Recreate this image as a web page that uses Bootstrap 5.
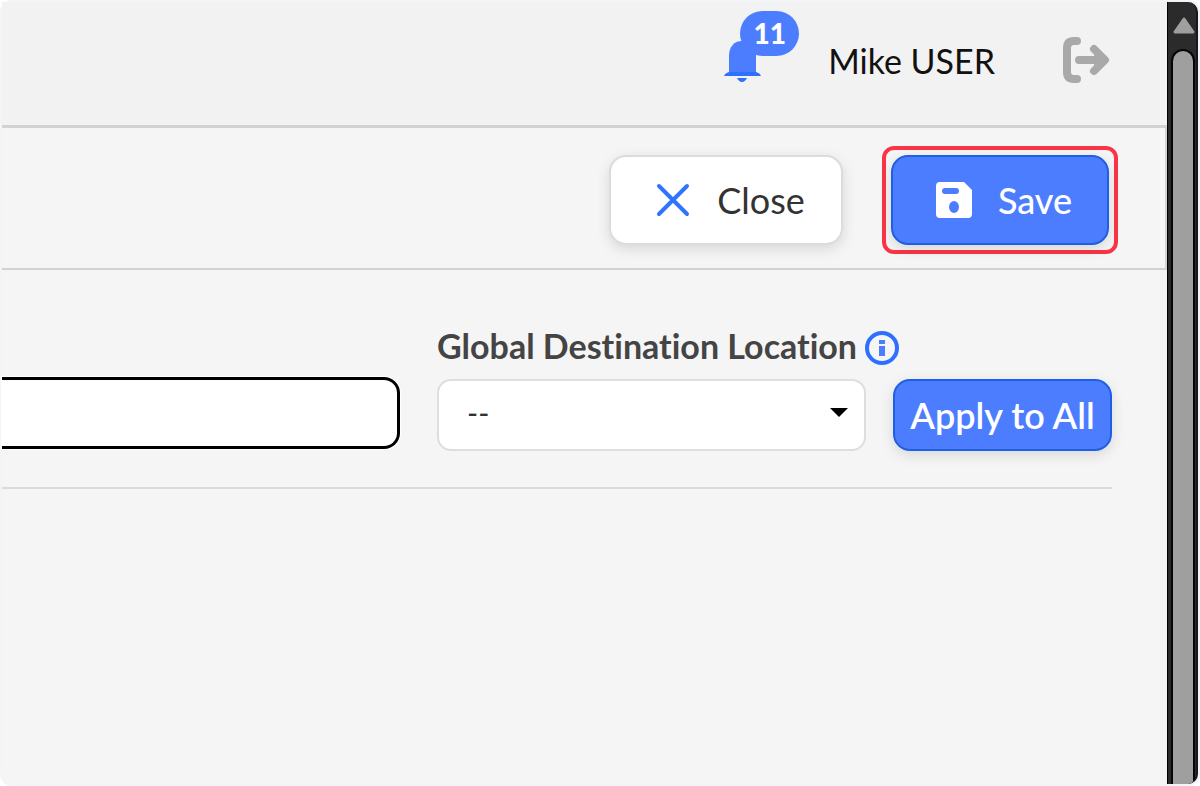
<!DOCTYPE html>
<html lang="en">
<head>
<meta charset="utf-8">
<meta name="viewport" content="width=device-width, initial-scale=1">
<title>Destination settings</title>
<link href="https://cdn.jsdelivr.net/npm/bootstrap@5.3.0/dist/css/bootstrap.min.css" rel="stylesheet">
<style>
  :root { --brand: #4d7dff; --brand-edge: #1f5fe6; --line: #d2d2d2; }
  body { font-family: Lato, "Liberation Sans", sans-serif; font-size: 34px; line-height: 40px; font-variant-ligatures: none; background: #fff; color: #222; }
  .app-frame { border: 2px solid #f3f3fa; border-radius: 12px; background: #f5f5f5; }
  .top-bar { background: #f2f2f2; border-bottom: 3px solid var(--line); padding: 0 56px 6px 24px; height: 126px; }
  .action-bar { border-bottom: 2px solid var(--line); border-right: 2px solid var(--line); padding: 4px 47px 0 24px; height: 142px; }
  .user-name { color: #111; margin-left: 66px; margin-right: 66px; }
  .icon-btn { border: 0; background: none; padding: 0; line-height: 0; }
  .bell-btn { width: 38px; height: 50px; }
  .bell-count { left: 16px; top: -25px; width: 59px; height: 45px; border-radius: 23px; background: var(--brand); color: #fff; font-size: 28px; font-weight: 900; line-height: 45px; }
  .act-btn { height: 90px; border-radius: 17px; border: 2px solid #dcdcdc; box-shadow: 0 4px 14px rgba(0,0,0,.12); font-size: 36px; line-height: 40px; }
  .icon-act { gap: 26px; padding: 0 0 0 8px; }
  .act-close { width: 234px; background: #fff; color: #333; }
  .act-main, .act-main:hover { background: var(--brand); border-color: var(--brand-edge); color: #fff; }
  .act-save { width: 218px; font-weight: 500; }
  .highlight { border: 4px solid #fa3545; border-radius: 12px; padding: 5px; margin-left: 39px; }
  .content { padding: 56px 55px 0 0; }
  .field-label { font-weight: 700; color: #444; line-height: 40px; margin-bottom: 13px; }
  .ctl { height: 72px; border-radius: 14px; }
  .text-ctl { border: 3px solid #000; border-left: 0; border-radius: 0 16px 16px 0; margin: 0 37px 2px 0; box-shadow: 0 0 0 1px #fff; }
  .text-ctl:focus { border-color: #000; }
  .pick-col { width: 429px; }
  .pick-ctl { border: 2px solid #dedede; background-color: #fff; font-size: 30px; color: #333; padding: 0 50px 6px 28px;
    background-image: url("data:image/svg+xml,%3csvg xmlns='http://www.w3.org/2000/svg' viewBox='0 0 18 9'%3e%3cpath fill='%23000' d='M0 0h18L9 9z'/%3e%3c/svg%3e"); background-size: 18px 9px; background-position: right 16px top 27px; }
  .apply-btn { width: 219px; margin-left: 27px; font-weight: 600; border-radius: 17px; padding: 0; }
  .divider { border-top: 2px solid #dadada; opacity: 1; margin: 36px 0 0; }
  .scroll-rail { width: 31px; background: #2b2b2b; border-left: 1px solid #000; border-right: 2px solid #161a1c; border-radius: 0 10px 10px 0; padding-top: 14px; overflow: hidden; }
  .scroll-thumb { width: 24px; background: #9f9f9f; border: 2px solid #050505; border-bottom: 0; border-radius: 12px 12px 0 0; margin-top: 15px; margin-left: 2px; }
</style>
</head>
<body>
<div class="app-frame d-flex min-vh-100">
  <main class="flex-grow-1">
    <header class="top-bar d-flex align-items-center justify-content-end">
      <button type="button" class="icon-btn bell-btn position-relative" aria-label="Notifications">
        <svg width="38" height="50" viewBox="0 0 38 50" fill="#4d7dff" aria-hidden="true"><path d="M5 38V20C5 11 10 5 18 5s14 6 14 15v18z"/><path fill="#2f70ff" d="M0 40q1-3 5-4h27q4 1 5 4zM13 42h10q-2 4-5 4t-5-4z"/></svg>
        <span class="bell-count position-absolute text-center">11</span>
      </button>
      <span class="user-name">Mike USER</span>
      <button type="button" class="icon-btn" aria-label="Sign out">
        <svg width="50" height="48" viewBox="0 0 50 48" fill="none" stroke="#a9a9a9" stroke-width="8" stroke-linecap="round" stroke-linejoin="round" aria-hidden="true"><path d="M16 4h-3q-7 0-7 7v24q0 7 7 7h3M18 23h22"/><path d="M33 12l11 11-11 11"/><path fill="#a9a9a9" stroke-width="1" d="M34 15l11 8-11 8z"/></svg>
      </button>
    </header>
    <div class="action-bar d-flex align-items-center justify-content-end">
      <button type="button" class="btn act-btn act-close icon-act d-flex align-items-center justify-content-center">
        <svg width="36" height="36" viewBox="0 0 36 36" stroke="#2f74ff" stroke-width="4" stroke-linecap="round" aria-hidden="true"><path d="M4 4l28 28M32 4L4 32"/></svg><span>Close</span>
      </button>
      <div class="highlight">
        <button type="button" class="btn act-btn act-main act-save icon-act d-flex align-items-center justify-content-center">
          <svg width="36" height="36" viewBox="0 0 36 36" aria-hidden="true"><path fill="#fff" fill-rule="evenodd" d="M4 0h24l8 8v24q0 4-4 4H4q-4 0-4-4V4q0-4 4-4zM9 6q-3 0-3 3t3 3h11q3 0 3-3t-3-3zM18 19a5 6 0 1 0 0 12 5 6 0 1 0 0-12z"/></svg><span>Save</span>
        </button>
      </div>
    </div>
    <section class="content">
      <form class="d-flex align-items-end">
        <input type="text" class="form-control ctl text-ctl flex-fill w-auto" aria-label="Value">
        <div class="pick-col flex-shrink-0">
          <div class="field-label d-flex align-items-center text-nowrap">
            <label for="dest">Global Destination Location</label>
            <svg class="ms-2 mt-1 flex-shrink-0" width="34" height="34" viewBox="0 0 34 34" aria-hidden="true"><circle cx="17" cy="17" r="15" fill="none" stroke="#2f6fff" stroke-width="4"/><path fill="#4d7dff" d="M14 9h6v4h-6zM14 15h6v10h-6z"/></svg>
          </div>
          <select id="dest" class="form-select ctl pick-ctl"><option>--</option></select>
        </div>
        <button type="button" class="btn act-btn act-main ctl apply-btn flex-shrink-0">Apply to All</button>
      </form>
      <hr class="divider">
    </section>
  </main>
  <div class="scroll-rail d-flex flex-column align-items-center flex-shrink-0" aria-hidden="true">
    <svg class="flex-shrink-0 ms-1" width="22" height="18" viewBox="0 0 22 18"><path d="M11 3L20 16H2z" fill="#9f9f9f" stroke="#9f9f9f" stroke-width="3" stroke-linejoin="round"/></svg>
    <div class="scroll-thumb flex-grow-1"></div>
  </div>
</div>
<script src="https://cdn.jsdelivr.net/npm/bootstrap@5.3.0/dist/js/bootstrap.bundle.min.js"></script>
</body>
</html>
